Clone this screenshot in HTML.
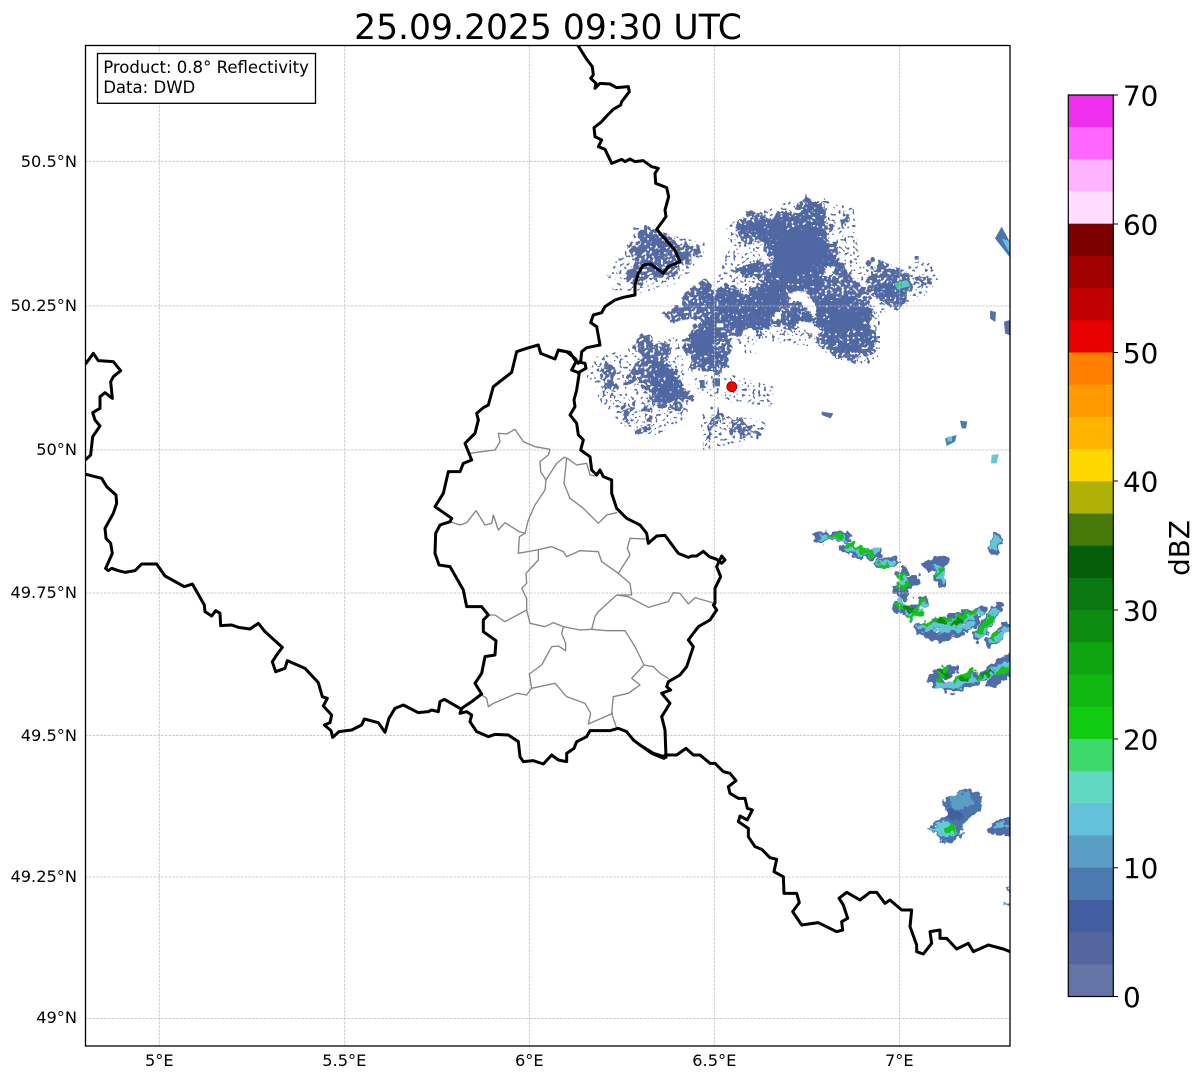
<!DOCTYPE html>
<html><head><meta charset="utf-8"><title>25.09.2025 09:30 UTC</title>
<style>
html,body{margin:0;padding:0;background:#fff;width:1202px;height:1081px;overflow:hidden}
svg{display:block}
text{font-family:"DejaVu Sans","Liberation Sans",sans-serif;fill:#000}
.t{font-size:16.2px}
.l{font-size:16.55px}
.c{font-size:27.8px}
.b{fill:none;stroke:#000;stroke-width:9;stroke-linejoin:round;stroke-linecap:round}
.g{fill:none;stroke:#858585;stroke-width:4;stroke-linejoin:round;stroke-linecap:round}
.gl{stroke:#bdbdbd;stroke-width:.8;stroke-dasharray:2.6 1.2;fill:none}
</style></head><body>
<svg width="1202" height="1081" viewBox="0 0 1202 1081" xmlns="http://www.w3.org/2000/svg">
<defs>
<clipPath id="ax"><rect x="85.5" y="45.5" width="924.5" height="1000.5"/></clipPath>
<filter id="sp" filterUnits="userSpaceOnUse" x="500" y="170" width="530" height="320" color-interpolation-filters="sRGB">
<feTurbulence type="fractalNoise" baseFrequency="0.09" numOctaves="2" seed="2" result="w"/>
<feDisplacementMap in="SourceGraphic" in2="w" scale="24" xChannelSelector="R" yChannelSelector="G" result="d"/>
<feTurbulence type="fractalNoise" baseFrequency="0.36" numOctaves="1" seed="4" result="n"/>
<feColorMatrix in="n" type="matrix" values="0 0 0 0 0  0 0 0 0 0  0 0 0 0 0  18 0 0 0 -7" result="m"/>
<feComposite in="d" in2="m" operator="in"/>
</filter>
<filter id="sp3" filterUnits="userSpaceOnUse" x="500" y="170" width="530" height="320" color-interpolation-filters="sRGB">
<feTurbulence type="fractalNoise" baseFrequency="0.36" numOctaves="1" seed="11" result="n"/>
<feColorMatrix in="n" type="matrix" values="0 0 0 0 0  0 0 0 0 0  0 0 0 0 0  18 0 0 0 -10.8" result="m"/>
<feComposite in="SourceGraphic" in2="m" operator="in"/>
</filter>
<filter id="sp2" filterUnits="userSpaceOnUse" x="500" y="170" width="530" height="320" color-interpolation-filters="sRGB">
<feTurbulence type="fractalNoise" baseFrequency="0.09" numOctaves="2" seed="6" result="w"/>
<feDisplacementMap in="SourceGraphic" in2="w" scale="20" xChannelSelector="R" yChannelSelector="G" result="d"/>
<feTurbulence type="fractalNoise" baseFrequency="0.36" numOctaves="1" seed="9" result="n"/>
<feColorMatrix in="n" type="matrix" values="0 0 0 0 0  0 0 0 0 0  0 0 0 0 0  18 0 0 0 -7.2" result="m"/>
<feComposite in="d" in2="m" operator="in"/>
</filter>
<filter id="ro" filterUnits="userSpaceOnUse" x="780" y="170" width="250" height="760" color-interpolation-filters="sRGB">
<feTurbulence type="fractalNoise" baseFrequency="0.16" numOctaves="2" seed="5" result="w"/>
<feDisplacementMap in="SourceGraphic" in2="w" scale="11" xChannelSelector="R" yChannelSelector="G"/>
</filter>
<filter id="ro2" filterUnits="userSpaceOnUse" x="500" y="170" width="530" height="320" color-interpolation-filters="sRGB">
<feTurbulence type="fractalNoise" baseFrequency="0.1" numOctaves="2" seed="8" result="w"/>
<feDisplacementMap in="SourceGraphic" in2="w" scale="18" xChannelSelector="R" yChannelSelector="G"/>
</filter>
</defs>
<rect width="1202" height="1081" fill="#fff"/>

<g clip-path="url(#ax)">
<!-- sparse outliers -->
<g filter="url(#sp3)"><g transform="translate(560,180) scale(.33333)" fill="#566aa3">
<polygon points="500,130 700,60 880,80 900,250 960,300 1100,230 1140,300 1060,380 960,400 960,530 880,560 760,500 600,480 540,520 590,520 500,470 470,300 500,220"/>
<polygon points="130,290 180,230 220,140 440,190 420,250 350,310 260,340 160,330"/>
<polygon points="80,590 110,530 350,470 400,660 370,720 280,770 190,740 120,660"/>
<polygon points="420,700 620,720 610,770 430,810"/>
<polygon points="395,590 500,580 640,620 640,680 500,665 420,640"/>
</g></g>
<!-- radar fringe -->
<g filter="url(#sp)"><g transform="translate(560,180) scale(.33333)" fill="#566aa3">
<polygon points="530,150 565,100 610,110 660,100 720,100 735,55 795,65 800,130 810,150 830,230 865,260 870,300 915,320 925,340 940,375 945,520 880,545 800,520 770,480 720,440 700,460 660,430 640,440 600,450 530,450 500,510 505,565 480,570 470,550 400,570 370,480 430,420 350,425 310,410 360,360 400,320 470,315 530,330 570,330 600,290 540,290 530,260 580,245 640,240 600,190 530,175"/>
<polygon points="230,160 280,150 320,160 345,190 420,205 410,240 360,250 350,290 320,290 260,300 240,310 200,290 220,260 210,225"/>
<polygon points="225,480 250,465 280,495 350,490 330,550 355,600 390,650 360,710 330,670 280,680 260,640 240,610 190,605 225,570 235,530"/>
<polygon points="115,560 155,535 165,610 140,665 125,610"/>
<polygon points="190,690 225,645 210,730 190,710"/>
<polygon points="225,740 245,720 275,735 235,770"/>
<polygon points="245,690 268,680 255,715"/>
<polygon points="450,710 475,685 485,730 460,760 435,800 440,760"/>
<polygon points="505,720 530,725 590,730 595,760 510,760"/>
<polygon points="920,255 1000,250 1030,275 1060,320 1040,370 1015,385 960,360 925,340"/>
<polygon points="1060,290 1100,285 1090,330 1070,310"/>
<polygon points="825,85 850,85 865,145 850,150"/>
<polygon points="140,285 155,285 150,300"/>
</g></g>
<g filter="url(#sp2)"><g transform="translate(560,180) scale(.33333)" fill="#4f67a2">
<polygon points="610,120 720,110 745,60 795,70 800,140 830,235 860,270 810,300 760,340 720,330 680,350 650,430 600,445 540,450 480,440 440,480 490,530 500,565 420,565 375,490 430,415 470,390 540,340 590,330 640,240 605,190"/>
<polygon points="760,350 870,345 935,385 935,480 880,520 810,490 760,430"/>
<polygon points="680,380 720,370 760,420 710,440 680,430"/>
<polygon points="270,540 340,550 370,640 340,670 280,660 275,600"/>
<polygon points="940,320 1000,300 1040,340 1015,380 960,355"/>
<polygon points="250,160 310,165 330,210 280,215"/>
<polygon points="400,325 520,325 580,350 570,410 470,390 420,370"/>
<polygon points="535,130 610,115 610,180 545,170"/>
<polygon points="540,255 610,250 600,290 550,285"/>
</g></g>
<g filter="url(#ro2)"><g transform="translate(560,180) scale(.33333)" fill="#4f67a2">
<polygon points="650,150 770,150 810,225 700,290 640,320 600,345 615,395 640,410 655,375 675,320 645,240"/>
<polygon points="405,490 465,440 490,450 435,530 400,530"/>
<polygon points="810,390 900,400 900,430 825,450"/>
<polygon points="305,565 335,575 345,615 305,630"/>
</g></g>
<g transform="translate(560,180) scale(.33333)">
<g filter="url(#ro2)" fill="#fff">
<polygon points="685,340 735,335 765,375 770,415 745,395 720,365 690,365"/>
<polygon points="715,425 750,425 785,455 770,470 730,450 705,440"/>
<polygon points="640,400 665,392 662,420 640,420"/>
<polygon points="450,365 490,360 490,385 460,395"/>
<polygon points="800,262 830,258 815,285 790,290"/>
</g>
<rect x="470" y="430" width="20" height="12" fill="#fff"/>
<g fill="#5a6ea6">
<rect x="420" y="600" width="14" height="25"/><rect x="458" y="595" width="22" height="24"/>
<polygon points="785,695 820,700 812,715 785,705"/>
<rect x="1064" y="228" width="12" height="11"/>
<polygon points="1290,392 1308,396 1306,426 1290,416"/>
<polygon points="1332,425 1350,420 1350,466 1335,460"/>
<polygon points="1000,308 1045,295 1060,320 1010,335" fill="#4f6ca8"/>
</g>
<polygon points="1003,310 1040,300 1052,318 1012,328" fill="#5ec6c4"/>
<rect x="1010" y="308" width="16" height="14" fill="#3dd070"/>
<polygon points="1305,175 1325,140 1352,190 1352,235" fill="#4a74ae"/>
<polygon points="1325,175 1352,185 1352,225" fill="#64c1dc"/>
<polygon points="1200,722 1222,725 1218,745 1205,745" fill="#4a7ab0"/>
<polygon points="1155,775 1190,765 1185,785 1160,798" fill="#4a7ab0"/>
<rect x="1162" y="770" width="14" height="14" fill="#60d0c2"/>
<polygon points="1295,825 1316,822 1310,850 1293,850" fill="#62c8d2"/>
</g>

<!-- green bands -->
<g filter="url(#ro)"><g transform="translate(800,520) scale(.33333)" fill="none" stroke-linecap="round" stroke-linejoin="round">
<g stroke="#4f6ca8" stroke-width="30">
<path d="M56 52 L135 50"/>
<path d="M135 85 L180 100 L235 100"/>
<path d="M240 130 L285 125"/>
<path d="M300 165 L318 155 M295 210 L345 178"/>
<path d="M290 210 L320 225"/>
<path d="M290 262 L330 275 L375 245"/>
<path d="M358 328 L420 310 L545 272"/>
<path d="M385 345 L440 350 L525 305"/>
<path d="M530 350 L595 265"/>
<path d="M570 365 L625 318"/>
<path d="M395 475 L460 448"/>
<path d="M410 490 L460 505 L560 462 L625 418"/>
<path d="M575 490 L625 455"/>
<path d="M385 135 L430 122"/>
<path d="M410 140 L425 188"/>
<path d="M580 86 L592 54"/>
</g>
<g stroke="#62c4d8" stroke-width="20">
<path d="M70 52 L130 52"/>
<path d="M140 85 L185 100 L230 94"/>
<path d="M240 130 L278 130"/>
<path d="M303 168 L315 190 M295 238 L330 275"/>
<path d="M328 298 L372 252"/>
<path d="M365 322 L420 315 L540 278"/>
<path d="M420 335 L515 312"/>
<path d="M535 348 L590 272"/>
<path d="M575 360 L625 325"/>
<path d="M415 498 L470 495 L560 465 L625 432"/>
<path d="M412 148 L428 178"/>
<path d="M580 78 L590 58"/>
</g>
<g stroke="#12c414" stroke-width="15">
<path d="M95 50 L125 50"/>
<path d="M142 72 L155 75 M170 85 L185 85 M190 98 L215 98"/>
<path d="M245 133 L265 133"/>
<path d="M295 172 L315 162 M300 200 L325 190"/>
<path d="M290 255 L320 265 M328 295 L372 242 M345 285 L365 280"/>
<path d="M368 315 L395 305 M415 300 L440 295 M455 310 L490 290 M495 285 L530 275"/>
<path d="M412 480 L438 447 M465 480 L520 455 M535 470 L570 460 M590 460 L625 445"/>
<path d="M410 165 L432 145"/>
<path d="M575 350 L590 340 M540 330 L580 290"/>
</g>
<g stroke="#0a8a12" stroke-width="13">
<path d="M310 262 L335 272 M425 455 L440 460 M482 478 L500 480 M545 468 L570 458 M460 312 L480 305 M420 300 L438 305"/>
</g>
</g></g>
<!-- southern cell -->
<g filter="url(#ro)"><g transform="translate(640,730) scale(.33333)">
<polygon fill="#4d73ac" points="905,210 990,175 1030,195 1025,240 970,280 965,305 930,340 905,335 890,310 860,295 900,270 925,235 905,225"/>
<polygon fill="#5a9ec6" points="930,200 985,185 1000,225 960,240 930,225"/>
<polygon fill="#60ccd4" points="865,295 905,275 945,285 950,310 915,322 890,305"/>
<polygon fill="#4560a1" points="920,235 945,235 975,260 945,278 915,255"/>
<rect x="918" y="285" width="27" height="24" fill="#12c414"/>
<polygon fill="#4f6ca8" points="908,335 978,306 980,314 912,342"/>
<polygon fill="#4f6ca8" points="1035,295 1110,255 1112,318 1050,310"/>
<polygon fill="#62b8d8" points="1055,292 1090,275 1100,290 1062,300"/>
<polygon fill="#4f7ab0" points="1098,470 1112,462 1112,492 1104,488"/>
<polygon fill="#4f7ab0" points="1090,520 1112,510 1112,518 1092,524"/>
</g></g>

<!-- grid -->
<g class="gl">
<path d="M159.3 45V1046M344.7 45V1046M529.3 45V1046M714.3 45V1046M899.7 45V1046"/>
<path d="M85 161.3H1010M85 306H1010M85 450H1010M85 593H1010M85 735.3H1010M85 877H1010M85 1018.5H1010"/>
</g>

<!-- cantons -->
<g transform="translate(420,420) scale(.33333)">
<path class="g" d="M150 100L185 95L225 90L240 65L235 40L260 42L285 28L310 65L345 80L390 88L385 105L360 125L362 155L378 180L410 130L432 112"/>
<path class="g" d="M432 112L442 115L470 135L500 130L510 165L525 168"/>
<path class="g" d="M440 115L432 190L450 235L490 265L535 310L560 285L590 278"/>
<path class="g" d="M378 180L375 210L345 255L325 300L315 340L298 350L295 400L350 390L395 380L430 395L440 410L480 392L535 395L545 425L595 460L630 405L622 385L630 355L680 357"/>
<path class="g" d="M90 305L120 315L140 308L168 272L195 315L215 310L220 285L235 330L255 308L298 335L315 340"/>
<path class="g" d="M355 392L355 420L318 460L320 490L305 505L320 535L320 570L255 605L225 585L205 585"/>
<path class="g" d="M320 570L330 610L375 620L400 608L430 620L480 630L515 628L560 632L615 632L645 680L672 735L635 775L660 795L625 820L580 830L575 880L590 925"/>
<path class="g" d="M595 460L630 490L635 525L590 525L535 575L525 590L515 628"/>
<path class="g" d="M590 525L625 530L685 562L745 545L760 518L780 520L805 552L825 533L885 550"/>
<path class="g" d="M430 620L425 640L437 670L437 692L415 678L395 680L365 735L328 762L335 805L320 825L290 820L220 850L205 860L200 835L185 825"/>
<path class="g" d="M335 805L405 790L440 830L495 850L512 880L505 912L578 880"/>
<path class="g" d="M672 735L700 740L720 760L745 775"/>
</g>

<!-- borders -->
<g transform="translate(560,40) scale(.33333)"><path class="b" d="M55 18L78 55L97 80L100 105L92 115L108 130L105 145L120 130L150 132L170 143L205 140L208 155L185 185L182 195L160 208L140 228L125 245L102 263L105 290L125 300L115 320L135 328L155 370L185 358L195 365L210 357L225 365L250 362L275 380L295 385L285 400L287 430L320 443L326 470L315 510L318 530L290 568L318 600L345 630L360 665L325 680L310 700L272 672L250 675L235 700L225 735L225 765L190 772L165 780L135 800L125 818L100 825L92 848L110 860L120 915"/></g>
<g transform="translate(560,180) scale(.33333)"><path class="b" d="M120 495L80 503L65 515L62 545M0 512L30 517L48 545L35 570L55 578L78 565L75 550L48 545M58 578L50 630L42 660L45 680L30 705L50 730L55 765L70 780L62 810L90 830L95 870"/></g>
<g transform="translate(420,420) scale(.33333)"><path class="b" d="M515 150L530 165L540 150L550 170L575 180L575 220L585 250L590 265L620 295L660 315L680 340L685 370L710 348L735 346L775 400L805 412L815 408L830 408L850 394L868 410L890 418L905 430L915 420L905 408L890 440L902 470L885 505L885 550L880 555L890 570L870 600L835 620L805 660L820 680L800 740L780 765L745 785L740 800L752 810L725 820L750 850L725 890L735 930L738 1010"/>
<path class="b" d="M738 1012L700 1000L660 975L640 960L620 935L595 925L570 932L510 932L500 950L470 965L462 985L440 1000L440 1025L415 1020L395 1005L370 1032L340 1022L310 1025L300 1010L295 965L265 945L225 943L205 950L170 935L150 905L155 885L140 875L120 880L125 865L155 845L185 822L165 790L185 760L195 710L225 705L228 662L190 635L190 600L205 585L185 560L140 560L130 510L90 440L57 435L45 400L47 340L60 315L90 305L95 295L45 260L70 220L85 155L120 155L130 130L155 120L135 70L165 40L175 0"/></g>
<g transform="translate(430,335) scale(.33333)"><path class="b" d="M145 255L140 235L160 218L175 210L190 155L245 112L260 50L290 40L325 30L332 55L375 72L385 45L410 50L437 72L445 85"/></g>
<g transform="translate(80,340) scale(.33333)"><path class="b" d="M18 70L40 40L55 62L100 65L122 92L100 110L92 125L97 175L75 158L60 170L60 205L38 218L45 240L60 258L38 290L32 345L18 358"/>
<path class="b" d="M18 403L65 415L80 440L108 465L110 490L100 520L75 565L78 595L92 610L97 640L77 685"/></g>
<g transform="translate(85,540) scale(.33333)"><path class="b" d="M62 85L70 92L80 85L100 92L120 97L150 92L170 72L215 72L240 108L298 140L322 132L358 195L360 215L380 228L392 212L405 220L407 257L440 255L460 262L495 267L520 250L540 275L592 322L575 345L562 365L572 395L600 385L607 362L660 385L700 428L712 470L727 475L715 498L740 525L735 548L718 555L738 572L743 592L762 575L800 570L830 555L838 537L880 548L900 577L912 535L930 505L955 495L1000 518L1030 515L1040 510L1060 515L1065 485L1078 478L1130 508"/></g>
<g transform="translate(640,730) scale(.33333)"><path class="b" d="M0 45L35 70L72 85L75 75L110 75L138 55L160 75L180 75L210 100L225 100L250 125L270 130L288 152L265 170L270 190L295 205L315 205L322 235L337 240L322 270L300 258L295 275L325 295L325 320L345 350L365 358L390 383L410 388L402 425L430 440L432 490L470 490L478 518L458 545L485 585L535 578L590 605L608 600L605 575L623 565L610 525L597 505L620 487L660 510L690 487L710 487L735 520L750 510L785 540L815 540L810 590L830 645L830 665L850 672L875 640L870 605L900 600L900 625L920 625L950 657L985 640L1000 665L1045 645L1090 657L1110 665"/></g>

<!-- radar site -->
<circle cx="731.8" cy="386.7" r="5" fill="#f00" stroke="#7a0000" stroke-width=".8"/>
</g>

<!-- axes frame -->
<rect x="85.5" y="45.5" width="924.5" height="1000.5" fill="none" stroke="#000" stroke-width="1.3"/>

<!-- info box -->
<rect x="97.5" y="53.5" width="218" height="49.8" fill="#fff" stroke="#000" stroke-width="1.3"/>
<text class="l" x="103.2" y="73">Product: 0.8° Reflectivity</text>
<text class="l" x="103.2" y="93">Data: DWD</text>

<!-- title -->
<text x="548" y="39" text-anchor="middle" font-size="34.55">25.09.2025 09:30 UTC</text>

<!-- y labels -->
<g class="t" text-anchor="end">
<text x="77" y="167">50.5°N</text>
<text x="77" y="311">50.25°N</text>
<text x="77" y="455">50°N</text>
<text x="77" y="598">49.75°N</text>
<text x="77" y="741">49.5°N</text>
<text x="77" y="882">49.25°N</text>
<text x="77" y="1023">49°N</text>
</g>
<!-- x labels -->
<g class="t" text-anchor="middle">
<text x="159.3" y="1066">5°E</text>
<text x="344.3" y="1066">5.5°E</text>
<text x="529.3" y="1066">6°E</text>
<text x="714.3" y="1066">6.5°E</text>
<text x="899.3" y="1066">7°E</text>
</g>

<!-- colorbar -->
<g>
<rect x="1068" y="963.9" width="45.5" height="32.6" fill="#6474a6"/>
<rect x="1068" y="931.7" width="45.5" height="32.6" fill="#53669f"/>
<rect x="1068" y="899.5" width="45.5" height="32.6" fill="#425da0"/>
<rect x="1068" y="867.3" width="45.5" height="32.6" fill="#4a7ab0"/>
<rect x="1068" y="835.1" width="45.5" height="32.6" fill="#5a9ec6"/>
<rect x="1068" y="802.9" width="45.5" height="32.6" fill="#64c1dc"/>
<rect x="1068" y="770.7" width="45.5" height="32.6" fill="#60d8c2"/>
<rect x="1068" y="738.5" width="45.5" height="32.6" fill="#3dd96c"/>
<rect x="1068" y="706.3" width="45.5" height="32.6" fill="#0fcc11"/>
<rect x="1068" y="674.1" width="45.5" height="32.6" fill="#10b912"/>
<rect x="1068" y="641.9" width="45.5" height="32.6" fill="#0ea510"/>
<rect x="1068" y="609.7" width="45.5" height="32.6" fill="#0c8c10"/>
<rect x="1068" y="577.5" width="45.5" height="32.6" fill="#0a7810"/>
<rect x="1068" y="545.3" width="45.5" height="32.6" fill="#055e0a"/>
<rect x="1068" y="513.1" width="45.5" height="32.6" fill="#467a08"/>
<rect x="1068" y="480.9" width="45.5" height="32.6" fill="#aeb005"/>
<rect x="1068" y="448.7" width="45.5" height="32.6" fill="#ffd800"/>
<rect x="1068" y="416.5" width="45.5" height="32.6" fill="#ffb400"/>
<rect x="1068" y="384.3" width="45.5" height="32.6" fill="#ff9a00"/>
<rect x="1068" y="352.1" width="45.5" height="32.6" fill="#ff8000"/>
<rect x="1068" y="319.9" width="45.5" height="32.6" fill="#e60000"/>
<rect x="1068" y="287.7" width="45.5" height="32.6" fill="#c00000"/>
<rect x="1068" y="255.5" width="45.5" height="32.6" fill="#a00000"/>
<rect x="1068" y="223.3" width="45.5" height="32.6" fill="#7c0000"/>
<rect x="1068" y="191.1" width="45.5" height="32.6" fill="#ffdcff"/>
<rect x="1068" y="158.9" width="45.5" height="32.6" fill="#ffb3ff"/>
<rect x="1068" y="126.7" width="45.5" height="32.6" fill="#ff66ff"/>
<rect x="1068" y="95" width="45.5" height="32.2" fill="#ee30ee"/>
<rect x="1068.3" y="95" width="45" height="901.5" fill="none" stroke="#000" stroke-width="1.2"/>
<path d="M1113 95H1118M1113 224H1118M1113 352.5H1118M1113 481H1118M1113 610H1118M1113 739H1118M1113 867.7H1118M1113 996.5H1118" stroke="#000" stroke-width="1" fill="none"/>
</g>
<g class="c">
<text x="1123" y="105.5">70</text>
<text x="1123" y="234.5">60</text>
<text x="1123" y="363">50</text>
<text x="1123" y="491.5">40</text>
<text x="1123" y="620.5">30</text>
<text x="1123" y="749.5">20</text>
<text x="1123" y="878">10</text>
<text x="1123" y="1007">0</text>
</g>
<text class="c" transform="translate(1189,548) rotate(-90)" text-anchor="middle">dBZ</text>
</svg>
</body></html>
